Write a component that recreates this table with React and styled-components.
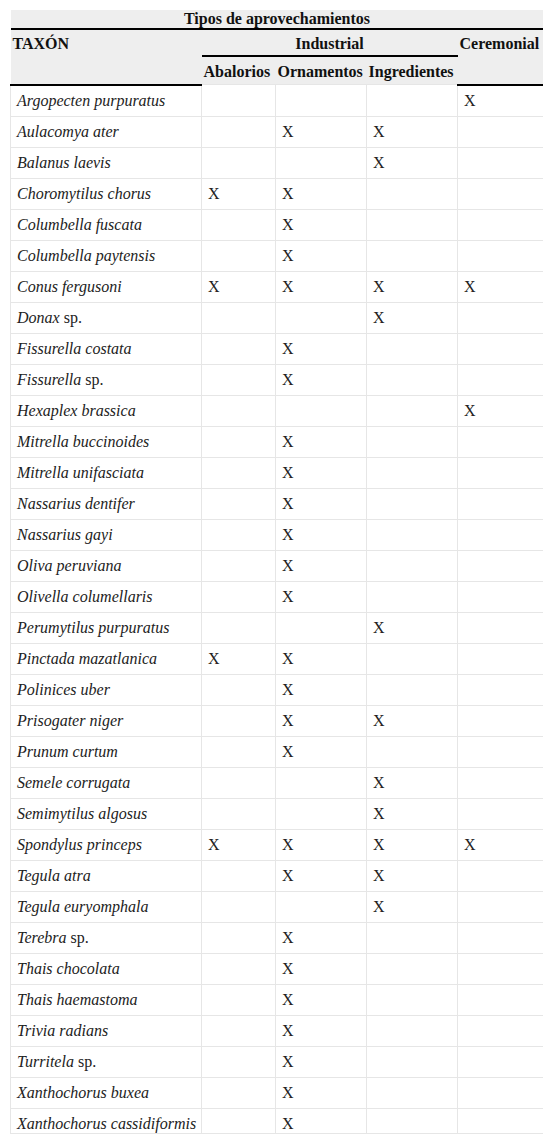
import React from "react";
import styled, { createGlobalStyle } from "styled-components";

const GlobalStyle = createGlobalStyle`
  body {
    margin: 0;
    background: #ffffff;
    font-family: "Liberation Serif", "Times New Roman", serif;
    color: #222;
  }
`;

const Page = styled.div`
  padding: 10px 10px 0 10px;
`;

// the original is cut off inside its frame, so the last row is clipped
const Frame = styled.div`
  width: 533px;
  height: 1124px;
  overflow: hidden;
  box-sizing: border-box;
  border-bottom: 1px solid #e6e6e6;
`;

const Table = styled.table`
  width: 533px;
  border-collapse: collapse;
  table-layout: fixed;
  font-size: 16px;
`;

const Head = styled.thead`
  background: #eeeeee;
`;

const HeadCell = styled.th`
  font-weight: bold;
  font-size: 16px;
  line-height: 17px;
  text-align: ${(p) => p.$align || "left"};
  vertical-align: ${(p) => p.$valign || "middle"};
  padding: ${(p) => p.$pad || "4px 2px"};
  color: #111;
  border-bottom: ${(p) => (p.$rule ? "2px solid #000" : "none")};
  white-space: nowrap;
`;

const Row = styled.tr`
  height: 30px;
`;

const Cell = styled.td`
  border: 1px solid #e6e6e6;
  padding: 0 6px;
  height: 30px;
  line-height: 18px;
  font-style: ${(p) => (p.$italic ? "italic" : "normal")};
  white-space: nowrap;
  color: #222;
`;

const Plain = styled.span`
  font-style: normal;
`;

const rows = [
  ["Argopecten purpuratus", "", "", "", "X"],
  ["Aulacomya ater", "", "X", "X", ""],
  ["Balanus laevis", "", "", "X", ""],
  ["Choromytilus chorus", "X", "X", "", ""],
  ["Columbella fuscata", "", "X", "", ""],
  ["Columbella paytensis", "", "X", "", ""],
  ["Conus fergusoni", "X", "X", "X", "X"],
  ["Donax|sp.", "", "", "X", ""],
  ["Fissurella costata", "", "X", "", ""],
  ["Fissurella|sp.", "", "X", "", ""],
  ["Hexaplex brassica", "", "", "", "X"],
  ["Mitrella buccinoides", "", "X", "", ""],
  ["Mitrella unifasciata", "", "X", "", ""],
  ["Nassarius dentifer", "", "X", "", ""],
  ["Nassarius gayi", "", "X", "", ""],
  ["Oliva peruviana", "", "X", "", ""],
  ["Olivella columellaris", "", "X", "", ""],
  ["Perumytilus purpuratus", "", "", "X", ""],
  ["Pinctada mazatlanica", "X", "X", "", ""],
  ["Polinices uber", "", "X", "", ""],
  ["Prisogater niger", "", "X", "X", ""],
  ["Prunum curtum", "", "X", "", ""],
  ["Semele corrugata", "", "", "X", ""],
  ["Semimytilus algosus", "", "", "X", ""],
  ["Spondylus princeps", "X", "X", "X", "X"],
  ["Tegula atra", "", "X", "X", ""],
  ["Tegula euryomphala", "", "", "X", ""],
  ["Terebra|sp.", "", "X", "", ""],
  ["Thais chocolata", "", "X", "", ""],
  ["Thais haemastoma", "", "X", "", ""],
  ["Trivia radians", "", "X", "", ""],
  ["Turritela|sp.", "", "X", "", ""],
  ["Xanthochorus buxea", "", "X", "", ""],
  ["Xanthochorus cassidiformis", "", "X", "", ""],
];

const Taxon = ({ name }) => {
  const [genus, rest] = name.split("|");
  return (
    <Cell $italic>
      {genus}
      {rest && <Plain> {rest}</Plain>}
    </Cell>
  );
};

const App = () => (
  <Page>
    <GlobalStyle />
    <Frame>
      <Table>
        <colgroup>
          <col style={{ width: 191 }} />
          <col style={{ width: 74 }} />
          <col style={{ width: 91 }} />
          <col style={{ width: 91 }} />
          <col style={{ width: 86 }} />
        </colgroup>
        <Head>
          <tr>
            <HeadCell colSpan={5} $align="center" $rule $pad="0 2px 1px">
              Tipos de aprovechamientos
            </HeadCell>
          </tr>
          <tr>
            <HeadCell rowSpan={2} $valign="top" $rule $pad="5px 2px">
              TAXÓN
            </HeadCell>
            <HeadCell colSpan={3} $align="center" $rule $pad="5px 2px 3px">
              Industrial
            </HeadCell>
            <HeadCell rowSpan={2} $valign="top" $rule $pad="5px 2px">
              Ceremonial
            </HeadCell>
          </tr>
          <tr>
            <HeadCell $pad="6px 2px 4px">Abalorios</HeadCell>
            <HeadCell $pad="6px 2px 4px">Ornamentos</HeadCell>
            <HeadCell $pad="6px 2px 4px">Ingredientes</HeadCell>
          </tr>
        </Head>
        <tbody>
          {rows.map(([name, ...marks]) => (
            <Row key={name}>
              <Taxon name={name} />
              {marks.map((m, i) => (
                <Cell key={i}>{m}</Cell>
              ))}
            </Row>
          ))}
        </tbody>
      </Table>
    </Frame>
  </Page>
);

export default App;
